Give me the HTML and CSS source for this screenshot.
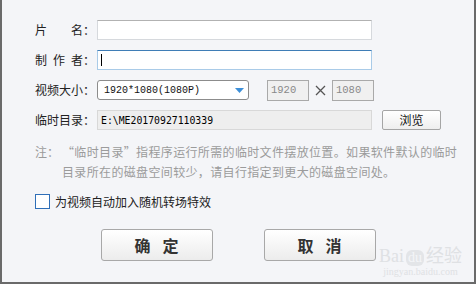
FILE: index.html
```html
<!DOCTYPE html>
<html lang="zh-CN">
<head>
<meta charset="utf-8">
<title>设置</title>
<link rel="stylesheet" href="styles.css">
</head>
<body>
<div class="dialog">
  <div class="form">
    <div class="row">
      <span class="label">片　　名：</span>
      <div class="input"></div>
    </div>
    <div class="row">
      <span class="label">制&#8194;作&#8194;者：</span>
      <div class="input focus"><span class="caret"></span></div>
    </div>
    <div class="row">
      <span class="label">视频大小：</span>
      <div class="select">
        <span class="mono">1920*1080(1080P)</span>
        <svg class="arrow" width="9" height="5" viewBox="0 0 9 5"><path d="M0 0H9L4.5 5Z" fill="#3d8fd8"/></svg>
      </div>
      <div class="size-box mono gray">1920</div>
      <svg class="times" width="11" height="11" viewBox="0 0 11 11"><path d="M1 1L10 10M10 1L1 10" stroke="#555" stroke-width="1.3" fill="none"/></svg>
      <div class="size-box mono gray">1080</div>
    </div>
    <div class="row">
      <span class="label">临时目录：</span>
      <div class="path mono dark">E:\ME20170927110339</div>
      <button class="browse">浏览</button>
    </div>
  </div>

  <div class="note">
    <span class="note-key">注：</span>
    <span class="note-text">“临时目录”指程序运行所需的临时文件摆放位置。如果软件默认的临时<br>目录所在的磁盘空间较少，请自行指定到更大的磁盘空间处。</span>
  </div>

  <label class="check-row">
    <span class="checkbox"></span>
    <span>为视频自动加入随机转场特效</span>
  </label>

  <div class="actions">
    <button class="big-btn"><span>确</span><span>定</span></button>
    <button class="big-btn"><span>取</span><span>消</span></button>
  </div>

  <div class="watermark">
    <div class="wm-top">Bai<span class="wm-du">du</span>经验</div>
    <div class="wm-url">jingyan.baidu.com</div>
  </div>
</div>
</body>
</html>
```

FILE: styles.css
```css
* { box-sizing: border-box; }

html, body {
  margin: 0;
  padding: 0;
  background: #f4f5f8;
}

body {
  font-family: "Noto Sans CJK SC", "Noto Sans", sans-serif;
  font-size: 12px;
  color: #222;
}

.dialog {
  position: relative;
  width: 476px;
  height: 284px;
  background: #f4f5f8;
  border-left: 2px solid #6a6a6a;
  border-right: 2px solid #6a6a6a;
  border-bottom: 2px solid #6a6a6a;
  padding: 20px 0 0 33px;
  overflow: hidden;
}

.form {
  display: flex;
  flex-direction: column;
  gap: 10px;
}

.row {
  display: flex;
  align-items: center;
  height: 20px;
}

.label {
  width: 62px;
  flex: none;
  font-size: 12px;
  line-height: 20px;
  white-space: nowrap;
  color: #222;
}

.input {
  width: 275px;
  height: 20px;
  background: #fff;
  border: 1px solid #d6d9dd;
  border-top-color: #b2b2b2;
  display: flex;
  align-items: center;
  padding-left: 3px;
}

.input.focus {
  border-color: #a9cbe8;
  border-top-color: #3f7db6;
}

.caret {
  width: 1px;
  height: 12px;
  background: #000;
}

.mono {
  font-family: "Liberation Mono", "DejaVu Sans Mono", monospace;
  font-size: 10px;
}

.dark {
  font-family: "DejaVu Sans Mono", "Liberation Mono", monospace;
  font-size: 9.8px;
  color: #000;
}

.gray { color: #888; font-size: 10.5px; }

.select {
  width: 152px;
  height: 20px;
  background: #fff;
  border: 1px solid #8c8c8c;
  border-radius: 3px;
  display: flex;
  align-items: center;
  justify-content: space-between;
  padding: 0 4px 0 6px;
  color: #111;
}

.arrow { display: block; }

.size-box {
  width: 42px;
  height: 21px;
  margin-left: 18px;
  background: #f0f0f0;
  border: 1px solid #a9a9a9;
  display: flex;
  align-items: center;
  padding-left: 3px;
}

.times {
  margin: 0 6px 0 6px;
  flex: none;
}

.times + .size-box { margin-left: 0; }

.path {
  width: 275px;
  height: 20px;
  background: #eeeeee;
  border: 1px solid #d8d8d8;
  display: flex;
  align-items: center;
  padding-left: 3px;
}

.browse {
  margin-left: 10px;
  width: 59px;
  height: 20px;
  padding: 0;
  border: 1px solid #a5a5a5;
  border-radius: 2px;
  background: linear-gradient(#ffffff, #eeeeee);
  font-family: "Noto Sans CJK SC", sans-serif;
  font-size: 12px;
  color: #111;
  line-height: 18px;
}

.note {
  display: flex;
  margin-top: 12px;
  font-size: 12px;
  line-height: 20px;
  color: #9b9b9b;
  white-space: nowrap;
}

.note-key {
  width: 27px;
  flex: none;
}

.note-text {
  letter-spacing: 0.35px;
}

.check-row {
  display: flex;
  align-items: center;
  gap: 5px;
  margin-top: 11px;
  height: 16px;
  font-size: 12px;
  color: #222;
}

.checkbox {
  width: 15px;
  height: 15px;
  border: 1px solid #2f6fb8;
  background: #fff;
  flex: none;
}

.actions {
  display: flex;
  justify-content: center;
  gap: 51px;
  margin-top: 20px;
  margin-left: -33px;
}

.big-btn {
  width: 112px;
  height: 32px;
  border: 1px solid #a8a8a8;
  border-radius: 3px;
  background: linear-gradient(#ffffff, #ececec);
  display: flex;
  align-items: center;
  justify-content: center;
  gap: 12px;
  padding: 0;
  font-family: "Noto Sans CJK SC", sans-serif;
  font-size: 16px;
  font-weight: 600;
  color: #333;
}

.watermark {
  position: absolute;
  right: 12px;
  bottom: 4px;
  color: #dfe1e4;
  text-align: center;
  pointer-events: none;
}

.wm-top {
  font-family: "Liberation Serif", serif;
  font-size: 18px;
  line-height: 20px;
}

.wm-du {
  display: inline-block;
  background: #e3e5e8;
  color: #f4f5f8;
  border-radius: 6px;
  font-size: 14px;
  line-height: 16px;
  padding: 0 2px;
  margin: 0 2px;
}

.wm-url {
  font-family: "Liberation Serif", serif;
  font-size: 10px;
  line-height: 12px;
}
```
